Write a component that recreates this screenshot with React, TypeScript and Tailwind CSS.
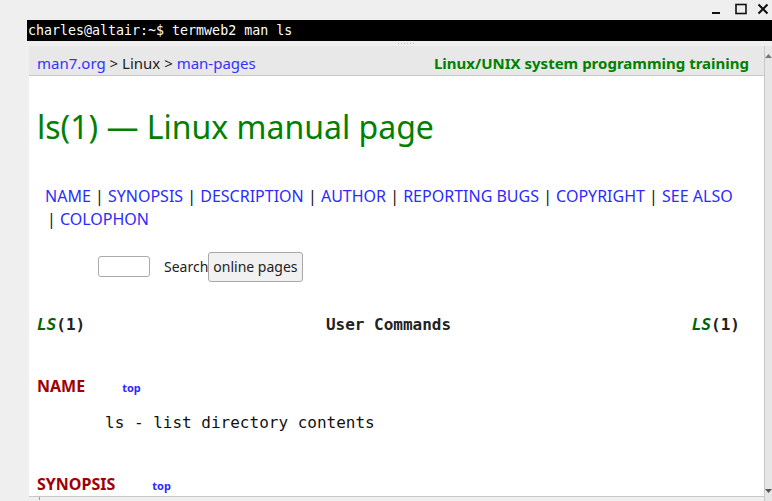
import React from "react";

const sans = { fontFamily: '"Noto Sans", "Open Sans", sans-serif' };
const mono = { fontFamily: '"DejaVu Sans Mono", "Liberation Mono", monospace' };

export default function App() {
  const links = ["NAME", "SYNOPSIS", "DESCRIPTION", "AUTHOR", "REPORTING BUGS", "COPYRIGHT", "SEE ALSO"];
  return (
    <div className="w-[772px] h-[501px] overflow-hidden bg-[#efefef] flex flex-col" style={sans}>
      {/* window controls */}
      <div className="h-[22px] flex justify-end items-start pt-[2px] pr-[3px]">
        <svg width="10" height="12" viewBox="0 0 10 12" className="mt-[1px]">
          <rect x="1" y="9" width="8" height="2" fill="#111" />
        </svg>
        <svg width="12" height="12" viewBox="0 0 12 12" className="mt-[1px] ml-[14px]">
          <rect x="1" y="1.5" width="10" height="9" fill="none" stroke="#111" strokeWidth="1.6" />
        </svg>
        <svg width="12" height="12" viewBox="0 0 12 12" className="mt-[1px] ml-[10px]">
          <path d="M1.5 1.5 L10.5 10.5 M10.5 1.5 L1.5 10.5" stroke="#111" strokeWidth="2" />
        </svg>
      </div>
      {/* terminal line */}
      <div className="h-[23px] ml-[27px] bg-black flex items-center pl-[1px]">
        <span className="text-white text-[13.3px] leading-none" style={mono}>charles@altair:~$ termweb2 man ls</span>
      </div>
      <div className="h-[5px] flex justify-center items-center">
        <div className="flex gap-[2px] ml-[40px]">
          {[0, 1, 2, 3, 4, 5].map((i) => (
            <div key={i} className="w-[1px] h-[1px] bg-[#bbb]" />
          ))}
        </div>
      </div>
      {/* browser */}
      <div className="flex-1 ml-[29px] flex">
        <div className="flex-1 flex flex-col border-r border-[#c8c8c8]">
          <div className="h-[30px] pt-[5px] bg-[#e8e8e8] border-b border-[#c8c8c8] flex items-center justify-between pl-[8px] pr-[15px] text-[15px]">
            <div>
              <span className="text-[#3333ff]">man7.org</span>
              <span className="text-[#222]"> &gt; Linux &gt; </span>
              <span className="text-[#3333ff]">man-pages</span>
            </div>
            <div className="font-bold text-[#008000]">Linux/UNIX system programming training</div>
          </div>
          <div className="flex-1 bg-white border-b border-[#c8c8c8] flex flex-col pl-[8px] pr-[24px]">
            <h1 className="mt-[29px] text-[32px] leading-[44px] text-[#008000]">ls(1) — Linux manual page</h1>
            <div className="mt-[36px] ml-[8px] text-[16px] leading-[23px] text-[#111]">
              {links.map((l, i) => (
                <React.Fragment key={l}>
                  {i > 0 && " | "}
                  <span className="text-[#2b2bff]">{l}</span>
                </React.Fragment>
              ))}
              <br />
              <span className="ml-[2px]">| </span>
              <span className="text-[#2b2bff]">COLOPHON</span>
            </div>
            <div className="mt-[21px] flex items-center h-[30px] ml-[61px] text-[14px] text-[#222]">
              <div className="w-[52px] h-[21px] border border-[#aaa] rounded-[3px] bg-white" />
              <span className="ml-[14px]">Search</span>
              <div className="h-[30px] px-[4px] border border-[#a8a8a8] rounded-[3px] bg-[#f1f1f1] flex items-center">online pages</div>
            </div>
            <div className="mt-[31px] flex justify-between items-center text-[16px] font-bold text-[#222]" style={mono}>
              <span><i className="text-[#006400]">LS</i>(1)</span>
              <span>User Commands</span>
              <span><i className="text-[#006400]">LS</i>(1)</span>
            </div>
            <div className="mt-[37px] flex items-baseline">
              <span className="text-[16px] font-bold text-[#a00000]">NAME</span>
              <span className="ml-[37px] text-[11px] font-bold text-[#2b2bff]">top</span>
            </div>
            <div className="mt-[13px] ml-[68px] text-[16px] text-[#111]" style={mono}>ls - list directory contents</div>
            <div className="mt-[37px] flex items-baseline">
              <span className="text-[16px] font-bold text-[#a00000]">SYNOPSIS</span>
              <span className="ml-[37px] text-[11px] font-bold text-[#2b2bff]">top</span>
            </div>
          </div>
          <div className="h-[4px] flex">
            <div className="ml-[10px] w-[1px] h-[3px] bg-[#999]" />
          </div>
        </div>
        <div className="w-[7px] bg-[#e6e6e6] flex flex-col justify-between items-center">
          <svg width="7" height="8" viewBox="0 0 7 8" className="mt-[6px]">
            <path d="M3.5 2 L7 6 L0 6 Z" fill="#777" />
          </svg>
          <svg width="7" height="8" viewBox="0 0 7 8" className="mb-[6px]">
            <path d="M0 2 L7 2 L3.5 6 Z" fill="#555" />
          </svg>
        </div>
      </div>
    </div>
  );
}
